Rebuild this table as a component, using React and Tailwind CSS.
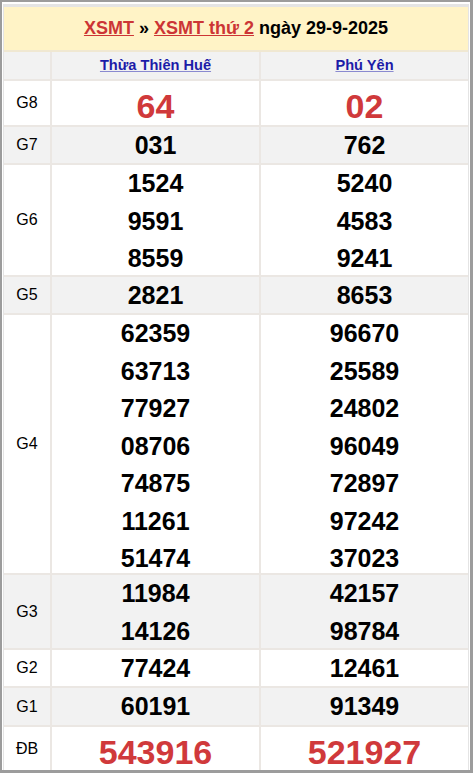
import React from "react";

const rows = [
  { label: "G8", h: "h-[44px]", a: ["64"], b: ["02"], red: true, gray: false },
  { label: "G7", h: "h-[36px]", a: ["031"], b: ["762"], gray: true },
  { label: "G6", h: "h-[110px]", a: ["1524", "9591", "8559"], b: ["5240", "4583", "9241"], gray: false },
  { label: "G5", h: "h-[36px]", a: ["2821"], b: ["8653"], gray: true },
  {
    label: "G4",
    h: "h-[258px]",
    a: ["62359", "63713", "77927", "08706", "74875", "11261", "51474"],
    b: ["96670", "25589", "24802", "96049", "72897", "97242", "37023"],
    gray: false,
  },
  { label: "G3", h: "h-[73px]", a: ["11984", "14126"], b: ["42157", "98784"], gray: true },
  { label: "G2", h: "h-[36px]", a: ["77424"], b: ["12461"], gray: false },
  { label: "G1", h: "h-[37px]", a: ["60191"], b: ["91349"], gray: true },
  { label: "ĐB", h: "h-[43px]", a: ["543916"], b: ["521927"], red: true, gray: false, last: true },
];

function Numbers({ list, red }) {
  return (
    <div className="flex h-full flex-col">
      {list.map((n) => (
        <div
          key={n}
          className={
            red
              ? "flex flex-1 items-center justify-center text-[34px] font-bold text-[#d0393b]"
              : "flex flex-1 items-center justify-center text-[25px] font-bold text-black"
          }
        >
          {n}
        </div>
      ))}
    </div>
  );
}

export default function App() {
  return (
    <div
      className="h-[773px] w-[473px] border-2 border-r-[3px] border-b-[3px] border-[#9c9c9c] bg-white pt-[2px] px-[1px]"
      style={{ fontFamily: '"Liberation Sans", Arial, sans-serif' }}
    >
      <div className="border-x border-t-[3px] border-[#e4e4e4]">
        {/* Title */}
        <div className="flex h-[43px] items-center justify-center border-b-2 border-[#f0e8d2] bg-[#fff3c6] text-[18px] font-bold text-black box-content">
          <a className="text-[#cc3535] underline decoration-[#cc3535]">XSMT</a>
          <span className="mx-[5px]">»</span>
          <a className="text-[#cc3535] underline">XSMT thứ 2</a>
          <span className="ml-[5px]">ngày 29-9-2025</span>
        </div>

        {/* Provinces */}
        <div className="flex h-[27px] border-b-2 border-[#ebe7e3] bg-[#f2f2f2] text-[14.6px] font-bold box-content">
          <div className="w-[46px] border-r-2 border-[#ebe7e3] box-content" />
          <div className="flex flex-1 items-center justify-center">
            <a className="text-[#1c1ca8] underline decoration-[#8a8ad0]">Thừa Thiên Huế</a>
          </div>
          <div className="flex flex-1 items-center justify-center border-l-2 border-[#ebe7e3]">
            <a className="text-[#1c1ca8] underline decoration-[#8a8ad0]">Phú Yên</a>
          </div>
        </div>

        {rows.map((r) => (
          <div
            key={r.label}
            className={`flex ${r.h} box-content ${r.last ? "" : "border-b-2 border-[#ebe7e3]"} ${
              r.gray ? "bg-[#f2f2f2]" : "bg-white"
            }`}
          >
            <div className="flex w-[46px] items-center justify-center border-r-2 border-[#ebe7e3] text-[16px] text-black box-content">
              {r.label}
            </div>
            <div className="flex-1">
              <Numbers list={r.a} red={r.red} />
            </div>
            <div className="flex-1 border-l-2 border-[#ebe7e3]">
              <Numbers list={r.b} red={r.red} />
            </div>
          </div>
        ))}
      </div>
    </div>
  );
}
